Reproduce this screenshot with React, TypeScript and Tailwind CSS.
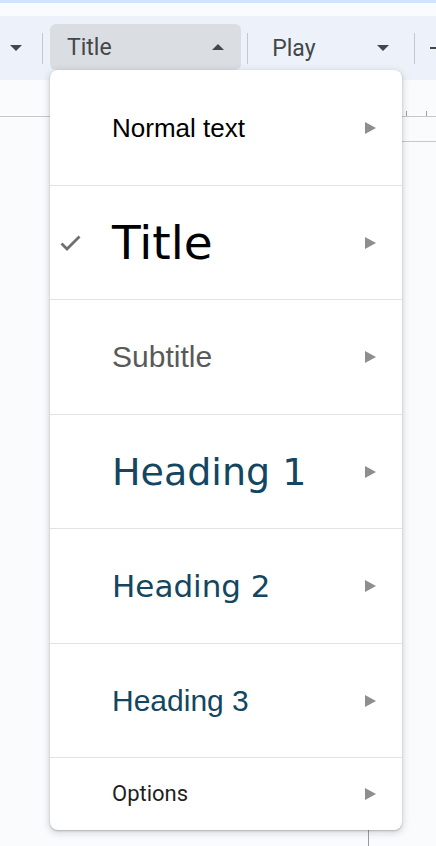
import React from "react";

const ITEMS = [
  { label: "Normal text", cls: "text-[26px] text-black", font: "arial", h: "h-[115px]" },
  { label: "Title", cls: "text-[47px] text-black", font: "play", h: "h-[114px]", checked: true },
  { label: "Subtitle", cls: "text-[30px] text-[#595959]", font: "arial", h: "h-[115px]" },
  { label: "Heading 1", cls: "text-[38px] text-[#134660]", font: "play", h: "h-[114px]" },
  { label: "Heading 2", cls: "text-[31px] text-[#134660]", font: "play", h: "h-[115px]" },
  { label: "Heading 3", cls: "text-[30px] text-[#134660]", font: "arial", h: "h-[114px]" },
];

function Caret({ up = false }: { up?: boolean }) {
  return (
    <svg width="12" height="6" viewBox="0 0 12 6" className="shrink-0">
      <path d={up ? "M0 6L6 0L12 6Z" : "M0 0L6 6L12 0Z"} fill="#444746" />
    </svg>
  );
}

function Arrow() {
  return (
    <svg width="11" height="12" viewBox="0 0 11 12" className="shrink-0">
      <path d="M0 0L11 6L0 12Z" fill="#8e8e8e" />
    </svg>
  );
}

function Sep() {
  return <div className="h-[31px] w-px bg-[#c7c7c7] shrink-0" />;
}

export default function App() {
  return (
    <div className="relative h-[846px] w-[436px] overflow-hidden bg-[#f9fbfd] font-['Roboto',sans-serif]">
      {/* top strip */}
      <div className="h-[3px] bg-[#d3e3fd]" />
      <div className="h-[13px] bg-[#f9fbfd]" />

      {/* toolbar */}
      <div className="flex h-[64px] items-center bg-[#edf2fa] text-[#444746]">
        <div className="ml-[10px] mr-[20px] flex items-center">
          <Caret />
        </div>
        <Sep />
        <div className="ml-[7px] -mt-[2px] flex h-[46px] w-[194px] items-center rounded-[6px] bg-[#dadde2] pl-[17px] pr-[17px]">
          <span className="flex-1 text-[23px] leading-none">Title</span>
          <Caret up />
        </div>
        <div className="ml-[6px]">
          <Sep />
        </div>
        <div className="flex w-[168px] items-center pl-[24px] pr-[25px]">
          <span className="flex-1 text-[23px] leading-none">Play</span>
          <Caret />
        </div>
        <Sep />
        <div className="ml-[15px] h-[2px] w-[6px] bg-[#444746]" />
      </div>

      {/* ruler / page background */}
      <div className="relative h-[766px] pt-[36px]">
        <div className="h-px bg-[#c7c7c7]" />
        <div className="absolute left-[406px] top-[31px] h-[5px] w-px bg-[#9aa0a6]" />
        <div className="absolute left-[426px] top-[31px] h-[5px] w-px bg-[#9aa0a6]" />
        <div className="absolute left-[402px] right-0 top-[61px] h-px bg-[#c7c7c7]" />
        <div className="absolute left-[368px] top-[750px] h-[16px] w-px bg-[#9a9a9a]" />
      </div>

      {/* dropdown menu */}
      <div className="absolute left-[50px] top-[70px] flex w-[352px] flex-col rounded-[8px] bg-white shadow-[0_2px_6px_2px_rgba(60,64,67,0.15),0_1px_2px_rgba(60,64,67,0.3)]">
        {ITEMS.map((it, i) => (
          <div
            key={it.label}
            className={`flex items-center border-[#e3e3e3] ${i > 0 ? "border-t" : ""} ${it.h}`}
          >
            <div className="flex w-[62px] shrink-0 pl-[10px]">
              {it.checked && (
                <svg width="21" height="17" viewBox="0 0 21 17">
                  <path d="M1.5 9.5L7 15L19.5 2.5" fill="none" stroke="#6f6f6f" strokeWidth="2.8" />
                </svg>
              )}
            </div>
            <span
              className={`flex-1 leading-none ${it.cls} ${
                it.font === "play"
                  ? "font-['DejaVu_Sans',sans-serif]"
                  : "font-['Liberation_Sans',Arial,sans-serif]"
              }`}
            >
              {it.label}
            </span>
            <div className="pr-[26px]">
              <Arrow />
            </div>
          </div>
        ))}
        <div className="flex h-[73px] items-center border-t border-[#e3e3e3]">
          <div className="w-[62px] shrink-0" />
          <span className="flex-1 text-[22px] leading-none text-[#1f1f1f]">Options</span>
          <div className="pr-[26px]">
            <Arrow />
          </div>
        </div>
      </div>
    </div>
  );
}
